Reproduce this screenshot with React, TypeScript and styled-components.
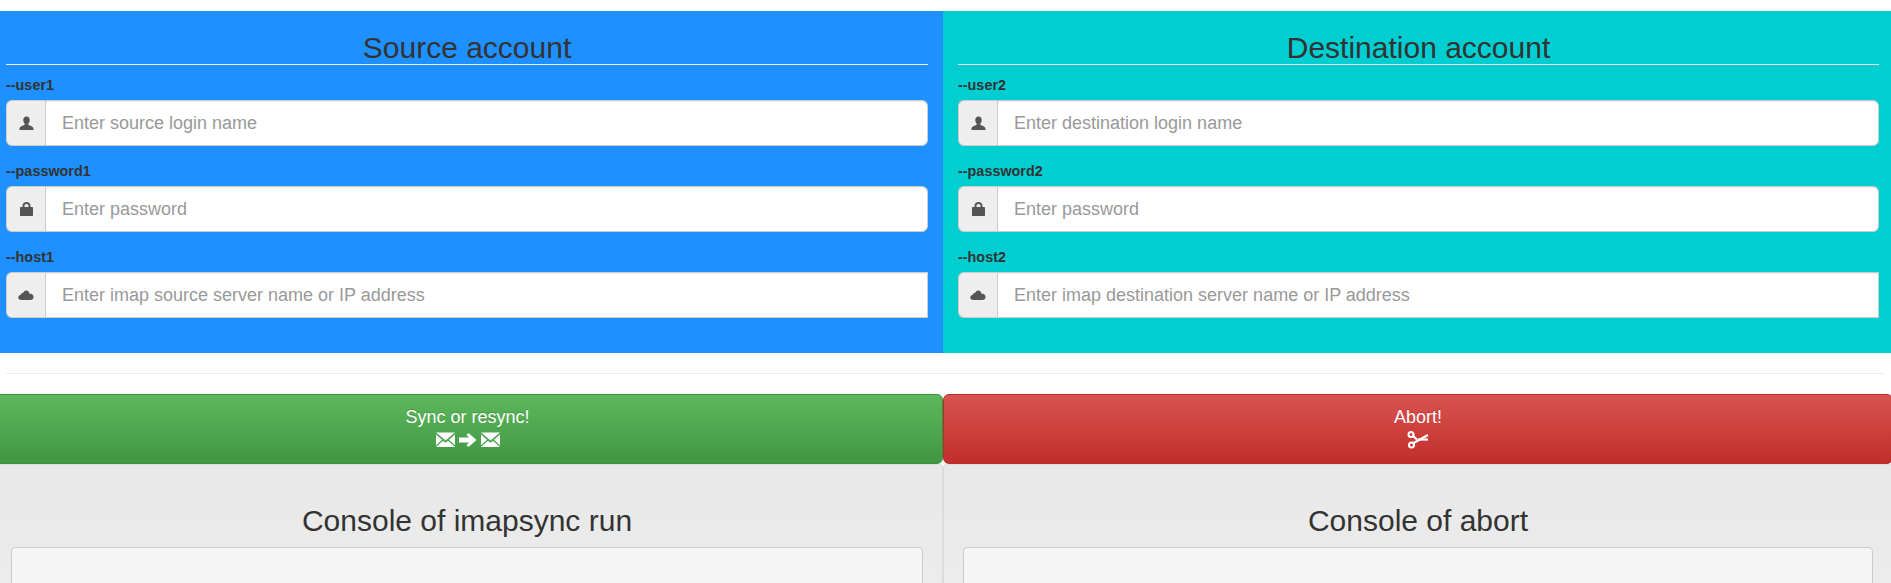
import React from 'react';
import styled, { createGlobalStyle } from 'styled-components';

const GlobalStyle = createGlobalStyle`
  html, body {
    margin: 0;
    padding: 0;
    height: 583px;
    overflow: hidden;
    background: #fff;
    font-family: "Liberation Sans", Arial, sans-serif;
    color: #333;
  }
  * { box-sizing: border-box; }
`;

const Page = styled.div`
  padding-top: 11px;
  height: 583px;
  overflow: hidden;
`;

const Columns = styled.div`
  display: grid;
  grid-template-columns: 943px 948px;
`;

// the lower rows hang 8px off the left side and 2px off the right side of the page
const WideColumns = styled.div`
  display: grid;
  grid-template-columns: 951px 950px;
  margin: 0 -2px 0 -8px;
`;

const AccountPanel = styled.section<{ $bg: string; $left: number; $right: number }>`
  height: 342px;
  background: ${(p) => p.$bg};
  padding: 0 ${(p) => p.$right}px 0 ${(p) => p.$left}px;
`;

const PanelTitle = styled.h3`
  margin: 0 0 10px;
  height: 54px;
  padding-top: 20px;
  border-bottom: 1px solid #eee;
  font-size: 30px;
  line-height: 33px;
  font-weight: 500;
  text-align: center;
  color: #333;
`;

const Field = styled.div`
  margin-bottom: 15px;
`;

const FieldLabel = styled.label`
  display: block;
  height: 20px;
  margin-bottom: 5px;
  font-size: 14.4px;
  line-height: 20px;
  font-weight: 700;
`;

const InputGroup = styled.div`
  display: flex;
  height: 46px;
`;

const Addon = styled.span`
  display: flex;
  align-items: center;
  justify-content: center;
  flex: 0 0 39px;
  background: #eee;
  border: 1px solid #ccc;
  border-right: 0;
  border-radius: 6px 0 0 6px;
  color: #555;
`;

const TextInput = styled.input<{ $square?: boolean }>`
  flex: 1;
  min-width: 0;
  padding: 10px 16px;
  border: 1px solid #ccc;
  border-radius: ${(p) => (p.$square ? '0' : '0 6px 6px 0')};
  background: #fff;
  font-family: inherit;
  font-size: 18px;
  line-height: 24px;
  color: #555;
  box-shadow: inset 0 1px 1px rgba(0, 0, 0, 0.075);
  &::placeholder {
    color: #999;
    opacity: 1;
  }
`;

const Rule = styled.hr`
  margin: 20px 6px;
  height: 1px;
  border: 0;
  background: #eee;
`;

const ActionButton = styled.button<{ $from: string; $to: string; $edge: string }>`
  display: block;
  width: 100%;
  height: 70px;
  padding: 8px 16px;
  border: 1px solid ${(p) => p.$edge};
  border-radius: 6px;
  background: linear-gradient(to bottom, ${(p) => p.$from} 0, ${(p) => p.$to} 100%);
  color: #fff;
  font-family: inherit;
  font-size: 18px;
  line-height: 24px;
  text-shadow: 0 -1px 0 rgba(0, 0, 0, 0.2);
  text-align: center;
`;

const IconRow = styled.span`
  display: flex;
  justify-content: center;
  align-items: center;
  gap: 4px;
  height: 20px;
  margin: 1px 0 3px;
`;

const Well = styled.section<{ $left: number }>`
  height: 119px;
  padding: 19px 19px 0 ${(p) => p.$left}px;
  background: linear-gradient(to bottom, #e8e8e8 0, #ececec 100%);
  border: 1px solid #dcdcdc;
  border-bottom: 0;
  border-radius: 4px 4px 0 0;
  overflow: hidden;
`;

const WellTitle = styled.h3`
  margin: 20px 0 10px;
  font-size: 30px;
  line-height: 33px;
  font-weight: 500;
  text-align: center;
  color: #333;
`;

const ConsoleBox = styled.div`
  height: 120px;
  background: #f5f5f5;
  border: 1px solid #ccc;
  border-radius: 4px;
`;

const UserIcon = () => (
  <svg width="15" height="15" viewBox="0 0 15 15" fill="currentColor">
    <path d="M7.500 0.500c-2.100 0-3.200 1.500-3.200 3.500 0 1.500 0.500 2.800 1.400 3.600 0.200 0.400 0.100 1-0.400 1.300C3.800 9.700 0.700 10.300 0.500 12.500v1.500h14v-1.500c-0.200-2.200-3.300-2.800-4.800-3.600-0.500-0.300-0.600-0.900-0.400-1.300 0.900-0.800 1.400-2.100 1.400-3.600 0-2-1.100-3.500-3.200-3.500z" />
  </svg>
);

const LockIcon = () => (
  <svg width="13" height="14" viewBox="0 0 13 14" fill="currentColor">
    <path fillRule="evenodd" d="M2.500 5V3.800C2.500 1.500 4.200 0 6.500 0s4 1.500 4 3.800V5h1.800c0.400 0 0.700 0.300 0.700 0.700v7.600c0 0.400-0.300 0.700-0.700 0.700H0.700C0.300 14 0 13.700 0 13.300V5.700C0 5.300 0.300 5 0.700 5h1.800zM4.500 5h4V3.800c0-1.200-0.800-1.900-2-1.900s-2 0.700-2 1.900V5z" />
  </svg>
);

const CloudIcon = () => (
  <svg width="16" height="14" viewBox="0 0 16 14" fill="currentColor">
    <path d="M3.200 12C1.500 12 0.300 10.900 0.300 9.500c0-1.300 1-2.300 2.300-2.500C3 5.500 3.900 4.900 5 5 5.700 3.200 7 2.300 8.400 2.400c1.800 0.100 3 1.600 3.200 3.500 0.300-0.100 0.600-0.100 0.900-0.100 1.800 0.100 3 1.500 3 3.100 0 1.600-1.300 3.100-3 3.100H3.200z" />
  </svg>
);

const EnvelopeIcon = () => (
  <svg width="19" height="16" viewBox="0 0 19 16" fill="#fff">
    <path d="M0 0.500h19L9.500 8.500 0 0.500z" />
    <path d="M0 2.500l6 5.300L0 13.500v-11zM19 2.500l-6 5.300 6 5.700v-11z" />
    <path d="M7 8.700l2.500 2.100 2.500-2.100 7 6.300H0l7-6.300z" />
  </svg>
);

const ArrowIcon = () => (
  <svg width="18" height="16" viewBox="0 0 18 16" fill="#fff">
    <path d="M0 5.500h10L7.500 3 9.500 1 17.500 8 9.500 15 7.500 13 10 10.500H0V5.500z" />
  </svg>
);

const ScissorsIcon = () => (
  <svg width="22" height="18" viewBox="0 0 22 18" fill="none" stroke="#fff">
    <circle cx="4" cy="3.500" r="2.500" strokeWidth="2" />
    <circle cx="4.500" cy="14" r="2.500" strokeWidth="2" />
    <path d="M6 5l4 3.500M6.500 12L21 4" strokeWidth="2.200" />
    <path d="M11 8.500h10" strokeWidth="2.200" />
  </svg>
);

type AccountProps = {
  title: string;
  bg: string;
  left: number;
  right: number;
  n: number;
  kind: string;
};

const AccountForm: React.FC<AccountProps> = ({ title, bg, left, right, n, kind }) => (
  <AccountPanel $bg={bg} $left={left} $right={right}>
    <PanelTitle>{title}</PanelTitle>
    <Field>
      <FieldLabel>--user{n}</FieldLabel>
      <InputGroup>
        <Addon><UserIcon /></Addon>
        <TextInput placeholder={`Enter ${kind} login name`} />
      </InputGroup>
    </Field>
    <Field>
      <FieldLabel>--password{n}</FieldLabel>
      <InputGroup>
        <Addon><LockIcon /></Addon>
        <TextInput placeholder="Enter password" />
      </InputGroup>
    </Field>
    <Field>
      <FieldLabel>--host{n}</FieldLabel>
      <InputGroup>
        <Addon><CloudIcon /></Addon>
        <TextInput $square placeholder={`Enter imap ${kind} server name or IP address`} />
      </InputGroup>
    </Field>
  </AccountPanel>
);

const App: React.FC = () => (
  <Page>
    <GlobalStyle />
    <Columns>
      <AccountForm title="Source account" bg="#1e90ff" left={6} right={15} n={1} kind="source" />
      <AccountForm title="Destination account" bg="#00ced1" left={15} right={12} n={2} kind="destination" />
    </Columns>
    <Rule />
    <WideColumns>
      <ActionButton $from="#5cb85c" $to="#419641" $edge="#3e8f3e">
        Sync or resync!
        <IconRow>
          <EnvelopeIcon />
          <ArrowIcon />
          <EnvelopeIcon />
        </IconRow>
      </ActionButton>
      <ActionButton $from="#d9534f" $to="#c12e2a" $edge="#b92c28">
        Abort!
        <IconRow>
          <ScissorsIcon />
        </IconRow>
      </ActionButton>
    </WideColumns>
    <WideColumns>
      <Well $left={18}>
        <WellTitle>Console of imapsync run</WellTitle>
        <ConsoleBox />
      </Well>
      <Well $left={19}>
        <WellTitle>Console of abort</WellTitle>
        <ConsoleBox />
      </Well>
    </WideColumns>
  </Page>
);

export default App;
